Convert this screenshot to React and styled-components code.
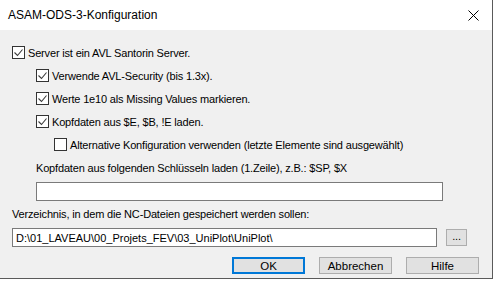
import React from 'react'
import styled, { createGlobalStyle } from 'styled-components'

const GlobalStyle = createGlobalStyle`
  html, body {
    margin: 0;
    padding: 0;
    background: #ffffff;
  }
  * {
    box-sizing: border-box;
  }
`

function CloseIcon() {
  return (
    <svg width='11' height='11' viewBox='0 0 11 11'>
      <path d='M0.5 0.5 L10.5 10.5 M10.5 0.5 L0.5 10.5' stroke='#000' strokeWidth='1' />
    </svg>
  )
}

function CheckMark() {
  return (
    <svg width='11' height='11' viewBox='0 0 11 11'>
      <path d='M1.5 5.5 L4.5 8.5 L9.5 2.5' stroke='#3c3c3c' strokeWidth='1.1' fill='none' />
    </svg>
  )
}

function Check({ indent, checked, children }) {
  return (
    <CheckRow indent={indent}>
      <Box>{checked && <CheckMark />}</Box>
      <span>{children}</span>
    </CheckRow>
  )
}

export default function App() {
  return (
    <>
      <GlobalStyle />
      <Window>
        <TitleBar>
          <span>ASAM-ODS-3-Konfiguration</span>
          <CloseButton>
            <CloseIcon />
          </CloseButton>
        </TitleBar>
        <Body>
          <Check indent={0} checked>
            Server ist ein AVL Santorin Server.
          </Check>
          <Check indent={24} checked>
            Verwende AVL-Security (bis 1.3x).
          </Check>
          <Check indent={24} checked>
            Werte 1e10 als Missing Values markieren.
          </Check>
          <Check indent={24} checked>
            Kopfdaten aus $E, $B, !E laden.
          </Check>
          <Check indent={42}>
            Alternative Konfiguration verwenden (letzte Elemente sind ausgewählt)
          </Check>
          <Label indent={24}>
            Kopfdaten aus folgenden Schlüsseln laden (1.Zeile), z.B.: $SP, $X
          </Label>
          <FieldRow indent={24}>
            <TextField width={407} value='' readOnly />
          </FieldRow>
          <Label indent={0}>
            Verzeichnis, in dem die NC-Dateien gespeichert werden sollen:
          </Label>
          <FieldRow indent={0}>
            <TextField
              width={425}
              value='D:\01_LAVEAU\00_Projets_FEV\03_UniPlot\UniPlot\'
              readOnly
            />
            <SmallButton>...</SmallButton>
          </FieldRow>
          <ButtonRow>
            <Button primary>OK</Button>
            <Button>Abbrechen</Button>
            <Button>Hilfe</Button>
          </ButtonRow>
        </Body>
      </Window>
    </>
  )
}

const Window = styled.div`
  width: 493px;
  height: 279px;
  background: #f0f0f0;
  border-right: 1px solid #5a5a5a;
  border-bottom: 1px solid #5a5a5a;
  display: flex;
  flex-direction: column;
  font-family: 'Liberation Sans', Arial, sans-serif;
  font-size: 11px;
  color: #000;
`

const TitleBar = styled.div`
  height: 30px;
  background: #ffffff;
  display: flex;
  align-items: center;
  justify-content: space-between;
  padding: 0 9px 0 8px;
  font-size: 12px;
`

const CloseButton = styled.div`
  width: 20px;
  display: flex;
  justify-content: center;
  align-items: center;
  padding-top: 1px;
`

const Body = styled.div`
  flex: 1;
  display: flex;
  flex-direction: column;
  padding: 11px 13px 0 12px;
  letter-spacing: -0.17px;
`

const CheckRow = styled.div`
  height: 23px;
  display: flex;
  align-items: center;
  gap: 3px;
  padding-left: ${(p) => p.indent}px;
  white-space: nowrap;
`

const Box = styled.div`
  width: 13px;
  height: 13px;
  border: 1px solid #333;
  background: #fff;
  display: flex;
  align-items: center;
  justify-content: center;
  flex-shrink: 0;
`

const Label = styled.div`
  height: 14px;
  line-height: 14px;
  margin-top: ${(p) => (p.indent ? 5 : 6)}px;
  padding-left: ${(p) => p.indent}px;
  white-space: nowrap;
`

const FieldRow = styled.div`
  display: flex;
  align-items: center;
  gap: 9px;
  margin-top: 7px;
  padding-left: ${(p) => p.indent}px;
`

const TextField = styled.input`
  width: ${(p) => p.width}px;
  height: 19px;
  border: 1px solid #7a7a7a;
  background: #fff;
  font-family: inherit;
  font-size: 11px;
  color: #000;
  padding: 0 3px;
  outline: none;
`

const SmallButton = styled.div`
  width: 21px;
  height: 17px;
  border: 1px solid #adadad;
  background: #e1e1e1;
  display: flex;
  align-items: flex-end;
  justify-content: center;
  padding-bottom: 3px;
  line-height: 1;
`

const ButtonRow = styled.div`
  display: flex;
  justify-content: flex-end;
  gap: 14px;
  margin-top: 10px;
`

const Button = styled.div`
  width: 73px;
  height: 17px;
  background: #e1e1e1;
  border: ${(p) => (p.primary ? '2px solid #0078d7' : '1px solid #adadad')};
  display: flex;
  align-items: center;
  justify-content: center;
  font-size: 11.5px;
  letter-spacing: 0;
`
